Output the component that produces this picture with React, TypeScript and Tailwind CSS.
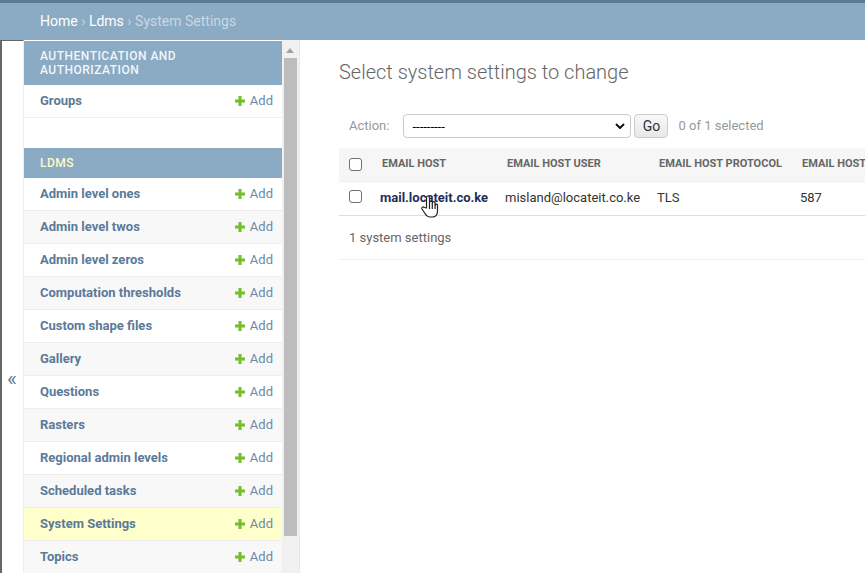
const models = [
  'Admin level ones',
  'Admin level twos',
  'Admin level zeros',
  'Computation thresholds',
  'Custom shape files',
  'Gallery',
  'Questions',
  'Rasters',
  'Regional admin levels',
  'Scheduled tasks',
  'System Settings',
  'Topics',
]

const PlusIcon = () => (
  <svg width="10" height="10" viewBox="0 0 10 10" className="shrink-0">
    <path d="M3.5 0h3v3.5H10v3H6.5V10h-3V6.5H0v-3h3.5z" fill="#70bf2b" />
  </svg>
)

const ModelRow = ({ name, index }: { name: string; index: number }) => {
  const current = name === 'System Settings'
  const stripe = index % 2 === 1 ? 'bg-[#f8f8f8]' : 'bg-white'

  return (
    <div
      className={`flex h-[33px] items-center justify-between border-b border-[#eeeeee] pl-4 pr-[9px] text-[13px] ${
        current ? 'bg-[#ffffcc]' : stripe
      }`}
    >
      <span className="font-bold text-[#5b7a99]">{name}</span>
      <span className="flex items-center gap-[5px] text-[#6c8aa8]">
        <PlusIcon />
        Add
      </span>
    </div>
  )
}

const Sidebar = () => (
  <div className="flex h-full w-[300px] shrink-0">
    <div className="w-6 shrink-0 border-l-2 border-r border-t border-l-[#666666] border-r-[#eeeeee] border-t-[#666666] bg-white">
      <div className="flex h-[677px] items-center pl-[5px]">
        <span className="text-[21px] leading-none text-[#5b7a99]">«</span>
      </div>
    </div>

    <div className="w-[258px] shrink-0 bg-white">
      <div className="border-t border-white bg-[#8baac4] px-4 pb-2 pt-2 text-[12px] font-medium uppercase leading-[14px] tracking-[0.5px] text-[#f2f6f9]">
        Authentication and Authorization
      </div>
      <div className="flex h-[33px] items-center justify-between border-b border-[#eeeeee] bg-white pl-4 pr-[9px] text-[13px]">
        <span className="font-bold text-[#5b7a99]">Groups</span>
        <span className="flex items-center gap-[5px] text-[#6c8aa8]">
          <PlusIcon />
          Add
        </span>
      </div>

      <div className="mt-[30px] flex h-[30px] items-center bg-[#8baac4] px-4 text-[12px] font-medium uppercase tracking-[0.5px]">
        <span className="text-[#fbfbc8]">Ldms</span>
      </div>
      {models.map((name, index) => (
        <ModelRow key={name} name={name} index={index} />
      ))}
    </div>

    <div className="flex w-[18px] shrink-0 flex-col items-center border-r border-[#e8e8e8] bg-[#f1f1f1] pl-[1px] pr-[2px]">
      <svg width="8" height="5" viewBox="0 0 8 5" className="mb-[5px] mt-[8px]">
        <path d="M4 0l4 5H0z" fill="#a3a3a3" />
      </svg>
      <div className="h-[478px] w-[13px] bg-[#bdbdbd]" />
    </div>
  </div>
)

const HandCursor = () => (
  <svg
    width="18"
    height="23"
    viewBox="0 0 18 23"
    className="absolute left-[82px] top-[47px]"
    fill="#ffffff"
    stroke="#222222"
    strokeWidth="1.2"
    strokeLinejoin="round"
  >
    <path d="M5.5 13V2.5a1.5 1.5 0 0 1 3 0V9V7.5a1.4 1.4 0 0 1 2.8 0V9.5V8a1.4 1.4 0 0 1 2.8 0V10a1.3 1.3 0 0 1 2.4 0v6c0 3.5-2 6-5 6H9c-2.5 0-3.5-1-5-3.5L1 14c-.8-1.5 1-3 2.3-1.5z" />
    <path d="M8.5 9v5M11.3 9.5v4.5M14.1 10v4" fill="none" />
  </svg>
)

const Checkbox = ({ className = '' }: { className?: string }) => (
  <input
    type="checkbox"
    className={`block size-[13px] appearance-none rounded-[3px] border border-[#707070] bg-white ${className}`}
  />
)

const ChangeList = () => (
  <div className="min-w-0 flex-1 overflow-hidden pl-[39px] pt-[20px]">
    <h1 className="text-[20px] font-light leading-[24px] text-[#666666]">Select system settings to change</h1>

    <div className="mt-[30px] flex h-[24px] w-[560px] items-center pl-[10px] text-[13px] text-[#999999]">
      <span className="mr-[14px]">Action:</span>
      <div className="relative">
        <select className="block h-[24px] w-[228px] appearance-none rounded border border-[#cccccc] bg-white pl-[8px] text-[13px] font-normal leading-none text-black">
          <option>---------</option>
        </select>
        <svg width="10" height="6" viewBox="0 0 10 6" className="absolute right-[6px] top-[9px]">
          <path d="M1 1l4 4 4-4" fill="none" stroke="#111111" strokeWidth="2" />
        </svg>
      </div>
      <button className="ml-[3px] h-[24px] w-[34px] rounded border border-[#cccccc] bg-linear-to-b from-[#f8f8f8] to-[#e8e8e8] pt-[1px] text-[14px] text-[#333333]">
        Go
      </button>
      <span className="ml-[10px] text-[#999999]">0 of 1 selected</span>
    </div>

    <div className="relative mt-[10px] w-[700px]">
      <table className="w-[700px] table-fixed border-collapse text-[13px]">
        <colgroup>
          <col className="w-[31px]" />
          <col className="w-[125px]" />
          <col className="w-[152px]" />
          <col className="w-[143px]" />
          <col />
        </colgroup>
        <thead>
          <tr className="h-[33px] border-b border-[#eeeeee] bg-[#f6f6f6] text-left text-[11px] font-bold uppercase text-[#666666]">
            <th className="pl-[10px]">
              <Checkbox />
            </th>
            <th className="pl-[12px] font-bold">Email host</th>
            <th className="pl-[12px] font-bold">Email host user</th>
            <th className="pl-[12px] font-bold">Email host protocol</th>
            <th className="pl-[12px] font-bold">Email host port</th>
          </tr>
        </thead>
        <tbody>
          <tr className="h-[34px] border-b border-[#dddddd] text-[#333333]">
            <td className="pl-[10px]">
              <Checkbox className="mb-[3px]" />
            </td>
            <td className="pl-[10px] font-bold text-[#1f2d5c]">mail.locateit.co.ke</td>
            <td className="pl-[10px]">misland@locateit.co.ke</td>
            <td className="pl-[10px]">TLS</td>
            <td className="pl-[10px]">587</td>
          </tr>
        </tbody>
      </table>
      <HandCursor />
    </div>

    <div className="flex h-[44px] w-[700px] items-center border-b border-[#eeeeee] pl-[10px] pt-[2px] text-[13px] text-[#666666]">
      1 system settings
    </div>
  </div>
)

export default function App() {
  return (
    <div className="flex h-[573px] w-[865px] flex-col overflow-hidden bg-white font-['Roboto',sans-serif]">
      <div className="flex h-10 shrink-0 items-center border-t-[3px] border-[#5c7895] bg-[#8baac4] pl-10 text-[14px] text-[#c9d8e5]">
        <span className="text-white">Home</span>
        <span className="mx-[3.5px]">›</span>
        <span className="text-white">Ldms</span>
        <span className="mx-[3.5px]">›</span>
        <span>System Settings</span>
      </div>
      <div className="flex min-h-0 flex-1">
        <Sidebar />
        <ChangeList />
      </div>
    </div>
  )
}
